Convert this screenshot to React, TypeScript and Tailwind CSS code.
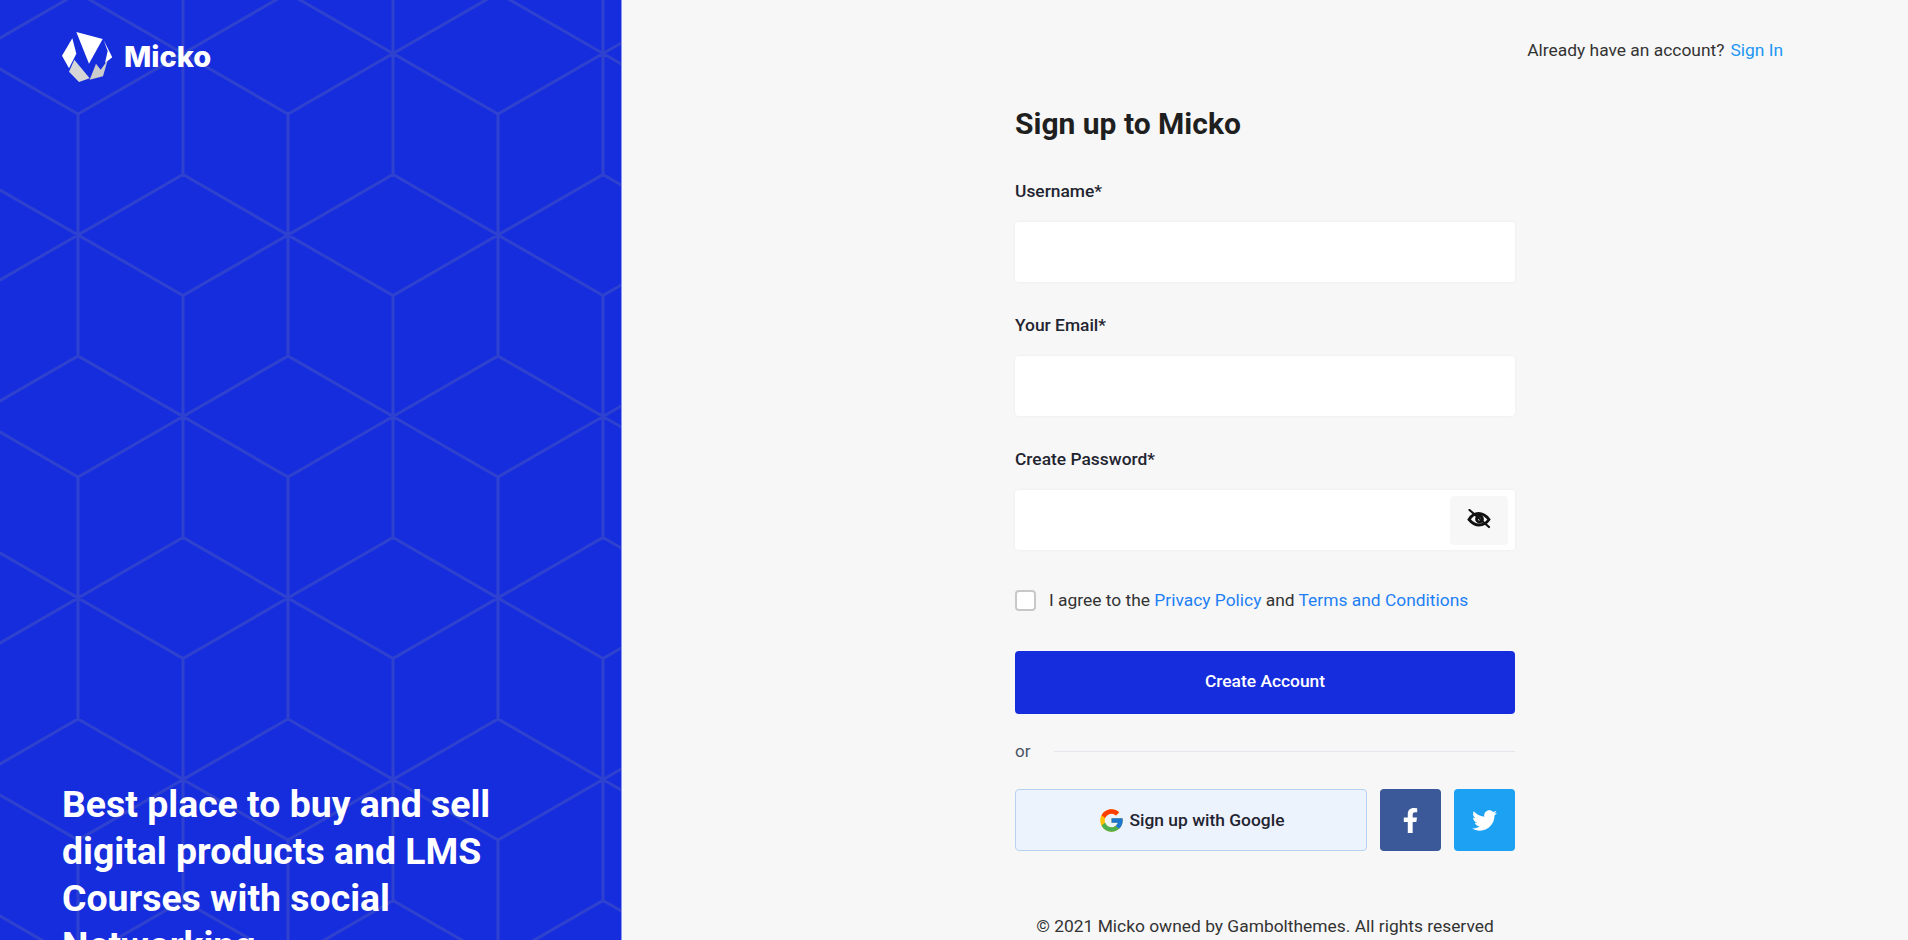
import React from "react";
import { FaFacebookF, FaTwitter } from "react-icons/fa";
import { FcGoogle } from "react-icons/fc";

const font = "font-['Roboto',sans-serif]";

function hexPath() {
  let d = "";
  const dx = 105, rise = 60.5, s = 121;
  for (let r = -1; r < 4; r++) {
    for (let c = -1; c < 5; c++) {
      const cells: [number, number][] = [
        [78 + c * 210, 114 + r * 363],
        [78 + c * 210 + dx, 114 + r * 363 + 181.5],
      ];
      for (const [x, y] of cells) {
        d += `M${x} ${y}V${y + 2 * s}`;
        d += `M${x - dx} ${y - rise}L${x} ${y}L${x + dx} ${y - rise}`;
        d += `M${x - dx} ${y + rise}L${x + dx} ${y + s + rise}`;
        d += `M${x - dx} ${y + s + rise}L${x + dx} ${y + rise}`;
        d += `M${x - dx} ${y + 2 * s + rise}L${x} ${y + 2 * s}L${x + dx} ${y + 2 * s + rise}`;
      }
    }
  }
  return d;
}

function Logo() {
  return (
    <svg width="50" height="50" viewBox="9 9 150 150" className="shrink-0">
      <polygon points="52,9 131,30 90,104" fill="#ffffff" />
      <polygon points="40,28 9,80 30,118 52,74" fill="#ffffff" />
      <polygon points="134,34 160,85 138,102 146,66" fill="#ffffff" />
      <polygon points="46,92 30,128 60,159 92,148" fill="#d6d6d6" />
      <polygon points="111,104 92,152 132,142 146,94 125,122" fill="#cccccc" />
    </svg>
  );
}

function Field({ label, eye }: { label: string; eye?: boolean }) {
  return (
    <div className="mb-[31px]">
      <label className="block mb-[19px] text-[17.4px] leading-[24px] font-[480] text-[#1f2430]">{label}</label>
      <div className="h-[60px] bg-white rounded-[4px] shadow-[0_0_3px_rgba(0,0,0,0.06)] flex items-center justify-end pr-[7px]">
        {eye && (
          <div className="w-[58px] h-[49px] bg-[#f7f7f7] rounded-[4px] flex items-center justify-center">
            <svg className="mb-[3px]" width="24" height="20" viewBox="0 0 24 20" fill="none" stroke="#111" strokeWidth="2.8" strokeLinecap="round">
              <path d="M2 10.500C4.500 6.500 7.500 4.500 11.500 4.500s7.500 2 10.500 6c-2 3-6 5.500-10 5.500-4.500 0-7.500-2.500-10-5.500z" />
              <circle cx="12.500" cy="10" r="3" />
              <path d="M2.500 1l19.500 17" strokeWidth="2.200" />
            </svg>
          </div>
        )}
      </div>
    </div>
  );
}

export default function App() {
  return (
    <div className={`${font} flex h-[940px] overflow-hidden bg-[#f7f7f7]`}>
      <aside className="relative w-[622px] shrink-0 bg-[#162ddd] border-r border-[#8a97f2] overflow-hidden flex flex-col justify-between pl-[62px] pr-[100px]">
        <svg className="absolute inset-0" width="621" height="940">
          <path d={hexPath()} fill="none" stroke="#2f42cf" strokeWidth="3" />
        </svg>
        <div className="relative flex items-center pt-[32px] gap-[12px]">
          <Logo />
          <span className="font-['Inter',sans-serif] font-extrabold text-[29px] text-white">Micko</span>
        </div>
        <h2 className="relative text-[37.4px] leading-[47px] font-bold text-white -mb-[29px]">
          Best place to buy and sell digital products and LMS Courses with social Networking
        </h2>
      </aside>
      <main className="flex-1 flex flex-col">
        <div className="flex justify-end items-center h-[100px] pt-[1px] pr-[125px] text-[17.4px] gap-[6px] text-[#333]">
          <span>Already have an account?</span>
          <span className="text-[#2196f3]">Sign In</span>
        </div>
        <div className="w-[500px] ml-[393px]">
          <h1 className="text-[30px] leading-[48px] font-bold text-[#1f1f1f] mb-[31px]">Sign up to Micko</h1>
          <Field label="Username*" />
          <Field label="Your Email*" />
          <Field label="Create Password*" eye />
          <div className="flex items-center h-[24px] mb-[39px] mt-[38px] text-[17.4px] text-[#333]">
            <span className="w-[21px] h-[21px] bg-white border-2 border-[#c8c8c8] rounded-[4px] mr-[13px]" />
            <span>
              I agree to the <span className="text-[#1e7ff5]">Privacy Policy</span> and{" "}
              <span className="text-[#1e7ff5]">Terms and Conditions</span>
            </span>
          </div>
          <div className="h-[63px] bg-[#162ddd] rounded-[4px] flex items-center justify-center pb-[2px] text-white text-[17.4px] font-medium">
            Create Account
          </div>
          <div className="flex items-center gap-[24px] mt-[25px] h-[24px] text-[17px] text-[#4a5568]">
            <span className="mt-[1px]">or</span>
            <div className="flex-1 h-px bg-[#e3e6ea]" />
          </div>
          <div className="flex gap-[13px] mt-[26px] h-[62px]">
            <div className="flex-1 bg-[#edf3fd] border border-[#b5d3f0] rounded-[4px] flex items-center justify-center gap-[5px] text-[17.4px] font-[480] text-[#1f2430]">
              <FcGoogle size={27} />
              Sign up with Google
            </div>
            <div className="w-[61px] bg-[#3b5998] rounded-[4px] flex items-center justify-center text-white">
              <FaFacebookF size={25} />
            </div>
            <div className="w-[61px] bg-[#1da1f2] rounded-[4px] flex items-center justify-center text-white">
              <FaTwitter size={25} />
            </div>
          </div>
          <p className="text-center mt-[63px] leading-[24px] text-[17.4px] text-[#333]">© 2021 Micko owned by Gambolthemes. All rights reserved</p>
        </div>
      </main>
    </div>
  );
}
